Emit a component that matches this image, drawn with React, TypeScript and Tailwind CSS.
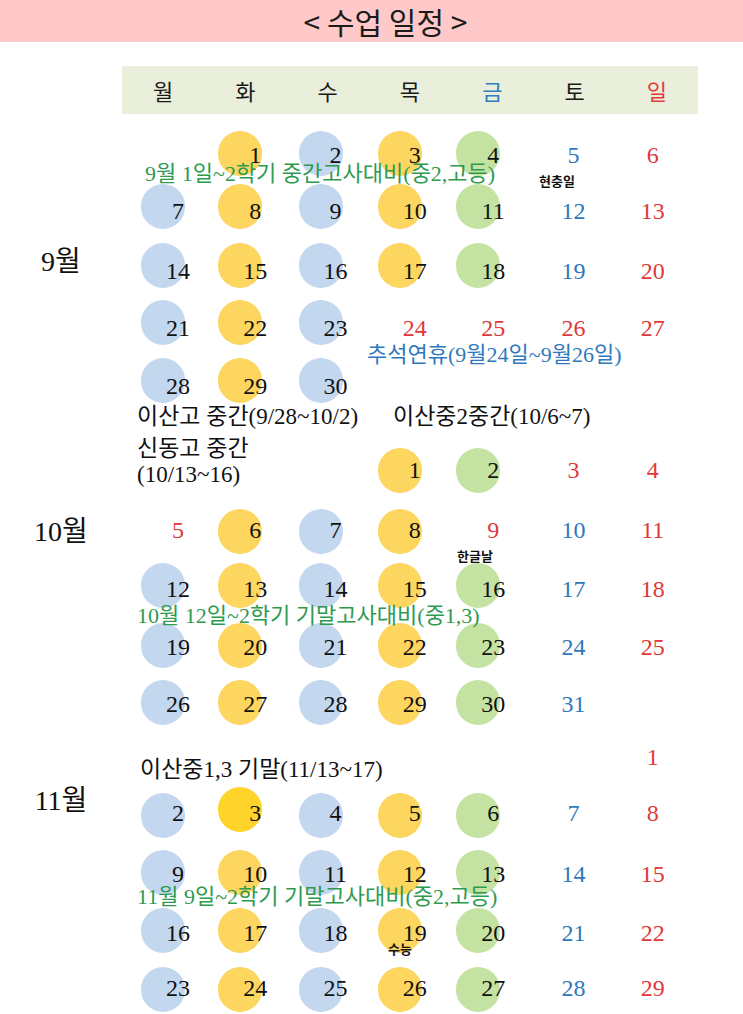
import type { ReactNode } from 'react'

type Row = {
  h: string
  ct?: string
  ny: string
  cells: (string | null)[]
  label?: { text: string; mt: string }
  lead?: { span: string; skip: number; content: ReactNode }
  overlays?: ReactNode
}

const serif = "font-['Liberation_Serif','Noto_Sans_CJK_KR',serif]"
const sans = "font-['Noto_Sans_CJK_KR','Noto_Sans',sans-serif]"

// per-column placement, the scan drifts a bit to the left
const numLeft = ['left-[56px]', 'left-[51px]', 'left-[49px]', 'left-[46px]', 'left-[42px]', 'left-[40px]', 'left-[37px]']
const circLeft = ['left-[19px]', 'left-[14px]', 'left-[12px]', 'left-[9px]', 'left-[5px]', 'left-[3px]', 'left-[0px]']

const circleBg: Record<string, string> = {
  b: 'bg-[#c3d7ef]',
  y: 'bg-[#fdd660]',
  g: 'bg-[#c4e3a2]',
  Y: 'bg-[#ffd42a]',
}

const textColor: Record<string, string> = {
  b: 'text-[#111]',
  y: 'text-[#111]',
  g: 'text-[#111]',
  Y: 'text-[#111]',
  s: 'text-[#2f78bd]',
  r: 'text-[#e0383a]',
}

function GreenNote({ left, top, children }: { left: string; top: string; children: ReactNode }) {
  return (
    <span className={`absolute z-10 ${left} ${top} -translate-y-1/2 whitespace-nowrap leading-none text-[22px] text-[#2e9a50] ${serif}`}>
      {children}
    </span>
  )
}

function SmallTag({ left, top, children }: { left: string; top: string; children: ReactNode }) {
  return (
    <span className={`absolute z-10 ${left} ${top} -translate-x-1/2 -translate-y-1/2 whitespace-nowrap leading-none text-[13px] font-bold text-[#111] ${sans}`}>
      {children}
    </span>
  )
}

const rows: Row[] = [
  // 9월
  {
    h: 'h-[53px]',
    ny: 'top-[24px]',
    cells: [null, '1y', '2b', '3y', '4g', '5s', '6r'],
    overlays: (
      <>
        <GreenNote left="left-[145px]" top="top-[43px]">9월 1일~2학기 중간고사대비(중2,고등)</GreenNote>
        <SmallTag left="left-[557px]" top="top-[49px]">현충일</SmallTag>
      </>
    ),
  },
  { h: 'h-[59px]', ny: 'top-[27px]', cells: ['7b', '8y', '9b', '10y', '11g', '12s', '13r'] },
  { h: 'h-[57px]', ny: 'top-[28px]', label: { text: '9월', mt: 'mt-[5px]' }, cells: ['14b', '15y', '16b', '17y', '18g', '19s', '20r'] },
  {
    h: 'h-[58px]',
    ny: 'top-[28px]',
    cells: ['21b', '22y', '23b', '24r', '25r', '26r', '27r'],
    overlays: (
      <span className={`absolute z-10 left-[367px] top-[55px] -translate-y-1/2 whitespace-nowrap leading-none text-[22px] text-[#2f78bd] ${serif}`}>
        추석연휴(9월24일~9월26일)
      </span>
    ),
  },
  { h: 'h-[47px]', ny: 'top-[28px]', cells: ['28b', '29y', '30b', null, null, null, null] },
]

const octRows: Row[] = [
  {
    h: 'h-[73px]',
    ct: 'mt-[12px]',
    ny: 'top-[22px]',
    cells: [null, null, null, '1y', '2g', '3r', '4r'],
    lead: {
      span: 'col-span-3',
      skip: 3,
      content: (
        <div className={`pl-[15px] leading-[26px] text-[23px] text-[#111] ${serif}`}>
          <div>신동고 중간</div>
          <div>(10/13~16)</div>
        </div>
      ),
    },
  },
  {
    h: 'h-[54px]',
    ny: 'top-[21px]',
    label: { text: '10월', mt: 'mt-[9px]' },
    cells: ['5r', '6y', '7b', '8y', '9r', '10s', '11r'],
    overlays: <SmallTag left="left-[475px]" top="top-[46px]">한글날</SmallTag>,
  },
  {
    h: 'h-[60px]',
    ny: 'top-[26px]',
    cells: ['12b', '13y', '14b', '15y', '16g', '17s', '18r'],
    overlays: <GreenNote left="left-[137px]" top="top-[53px]">10월 12일~2학기 기말고사대비(중1,3)</GreenNote>,
  },
  { h: 'h-[57px]', ny: 'top-[24px]', cells: ['19b', '20y', '21b', '22y', '23g', '24s', '25r'] },
  { h: 'h-[65px]', ny: 'top-[24px]', cells: ['26b', '27y', '28b', '29y', '30g', '31s', null] },
]

const novRows: Row[] = [
  {
    h: 'h-[48px]',
    ny: 'top-[12px]',
    cells: [null, null, null, null, null, null, '1r'],
    lead: {
      span: 'col-span-5',
      skip: 5,
      content: (
        <div className={`pl-[18px] pt-[12px] leading-[26px] whitespace-nowrap text-[23px] text-[#111] ${serif}`}>
          이산중1,3 기말(11/13~17)
        </div>
      ),
    },
  },
  { h: 'h-[57px]', ny: 'top-[20px]', label: { text: '11월', mt: '-mt-[6px]' }, cells: ['2b', '3Y', '4b', '5y', '6g', '7s', '8r'] },
  {
    h: 'h-[58px]',
    ny: 'top-[24px]',
    cells: ['9b', '10y', '11b', '12y', '13g', '14s', '15r'],
    overlays: <GreenNote left="left-[137px]" top="top-[47px]">11월 9일~2학기 기말고사대비(중2,고등)</GreenNote>,
  },
  {
    h: 'h-[59px]',
    ny: 'top-[25px]',
    cells: ['16b', '17y', '18b', '19y', '20g', '21s', '22r'],
    overlays: <SmallTag left="left-[400px]" top="top-[40px]">수능</SmallTag>,
  },
  { h: 'h-[47px]', ny: 'top-[21px]', cells: ['23b', '24y', '25b', '26y', '27g', '28s', '29r'] },
]

function DayCell({ code, col, row }: { code: string | null; col: number; row: Row }) {
  if (!code) return <div />
  const num = code.slice(0, -1)
  const kind = code.slice(-1)
  const circled = kind in circleBg
  return (
    <div>
      <div className={`relative h-[44px] ${row.ct ?? ''}`}>
        {circled && (
          <div
            className={`absolute ${kind === 'Y' ? '-top-[6px]' : 'top-0'} ${circLeft[col]} w-[44px] h-[45px] rounded-full ${circleBg[kind]}`}
          />
        )}
        <span
          className={`absolute ${numLeft[col]} ${row.ny} -translate-x-1/2 -translate-y-1/2 leading-none text-[24px] ${textColor[kind]} ${serif}`}
        >
          {num}
        </span>
      </div>
    </div>
  )
}

function WeekRow({ row }: { row: Row }) {
  const skip = row.lead?.skip ?? 0
  return (
    <div className={`relative grid w-[698px] grid-cols-[122px_repeat(7,minmax(0,1fr))] ${row.h}`}>
      <div>
        {row.label && (
          <div className={`text-center leading-none text-[28px] text-[#111] ${serif} ${row.label.mt}`}>{row.label.text}</div>
        )}
      </div>
      {row.lead && <div className={row.lead.span}>{row.lead.content}</div>}
      {row.cells.map((c, i) => (i < skip ? null : <DayCell key={i} code={c} col={i} row={row} />))}
      {row.overlays}
    </div>
  )
}

const weekdays = [
  { t: '월', c: 'text-[#1a1a1a]' },
  { t: '화', c: 'text-[#1a1a1a]' },
  { t: '수', c: 'text-[#1a1a1a]' },
  { t: '목', c: 'text-[#1a1a1a]' },
  { t: '금', c: 'text-[#2f7fc1]' },
  { t: '토', c: 'text-[#1a1a1a]' },
  { t: '일', c: 'text-[#e53a3a]' },
]

export default function App() {
  return (
    <div className="w-[743px] h-[1014px] overflow-hidden bg-white">
      {/* title bar */}
      <div className="flex h-[42px] items-center justify-center bg-[#fec9c8] pl-[28px]">
        <span className={`text-[30px] leading-[38px] text-[#1b1b1b] ${sans}`}>&lt; 수업 일정 &gt;</span>
      </div>

      {/* weekday band */}
      <div className="ml-[122px] mt-[24px] grid h-[48px] w-[576px] grid-cols-7 items-center bg-[#e9efdb]">
        {weekdays.map((d) => (
          <div key={d.t} className={`text-center text-[22px] leading-none ${d.c} ${sans}`}>
            {d.t}
          </div>
        ))}
      </div>

      <div className="mt-[17px]">
        {rows.map((r, i) => (
          <WeekRow key={`s${i}`} row={r} />
        ))}

        {/* exam notes between 9월 and 10월 */}
        <div className={`flex h-[31px] pl-[137px] leading-[24px] text-[23px] text-[#111] ${serif}`}>
          <span className="w-[256px] shrink-0 whitespace-nowrap">이산고 중간(9/28~10/2)</span>
          <span className="whitespace-nowrap">이산중2중간(10/6~7)</span>
        </div>

        {octRows.map((r, i) => (
          <WeekRow key={`o${i}`} row={r} />
        ))}
        {novRows.map((r, i) => (
          <WeekRow key={`n${i}`} row={r} />
        ))}
      </div>
    </div>
  )
}
